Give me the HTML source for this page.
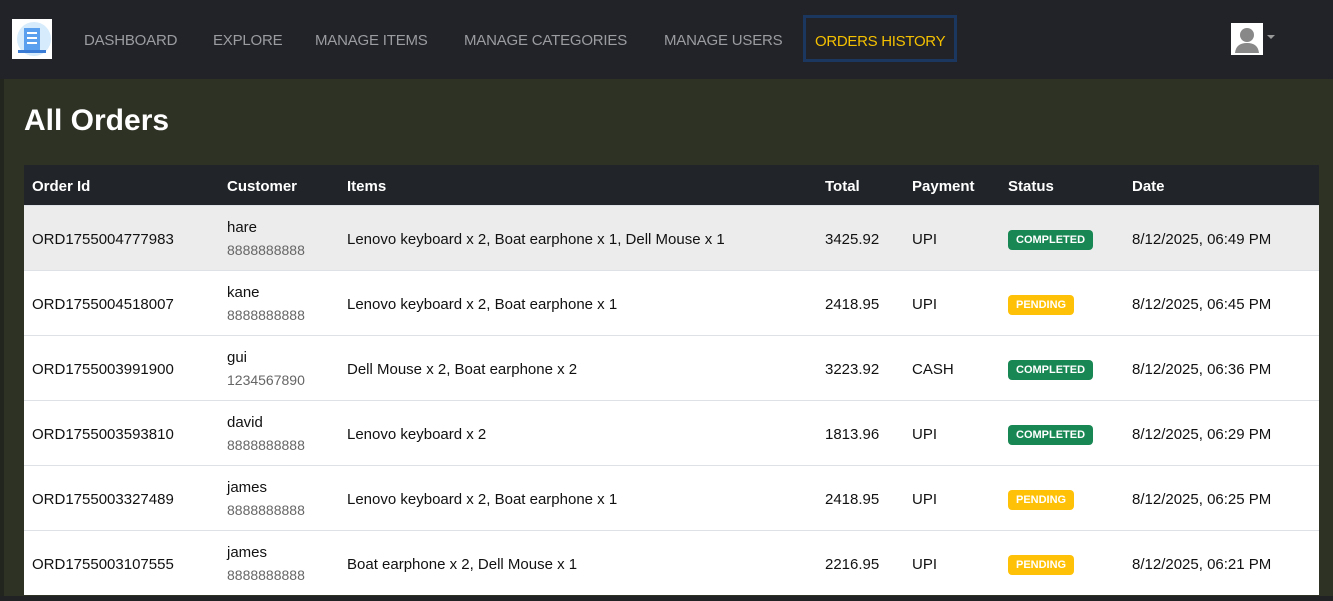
<!DOCTYPE html>
<html><head><meta charset="utf-8"><style>
*{box-sizing:border-box;margin:0;padding:0}
body{width:1333px;height:601px;overflow:hidden;background:#2e3225;font-family:"Liberation Sans",sans-serif;position:relative}
.nav{position:absolute;left:0;top:0;width:1333px;height:79px;background:#212329}
.logo{position:absolute;left:12px;top:19px;width:40px;height:40px;background:#fff}
.nl{position:absolute;top:32px;color:#9a9ca0;font-size:15px;letter-spacing:-0.2px}
.act{position:absolute;left:803px;top:15px;width:154px;height:47px;border:3px solid #1c375f;color:#f5c000;font-size:15px;padding:15px 0 0 9px;letter-spacing:-0.3px}
.av{position:absolute;left:1231px;top:23px;width:32px;height:32px;background:#fff}
.caret{position:absolute;left:1267px;top:35px;border-left:4px solid transparent;border-right:4px solid transparent;border-top:4px solid #999}
.leftbar{position:absolute;left:0;top:79px;width:4px;height:522px;background:#22251d}
h1{position:absolute;left:24px;top:104px;color:#fff;font-size:30px;font-weight:bold}
table{position:absolute;left:24px;top:165px;width:1295px;border-collapse:collapse;font-size:15px;color:#111}
th{background:#212529;color:#fff;text-align:left;height:40px;font-size:15px;padding-left:8px;padding-top:4px}
td{height:65px;background:#fff;border-top:1px solid #dee2e6;padding-left:8px;vertical-align:middle;padding-top:4px}
tr.h td{background:#ececec}
.c{line-height:22px}.c span{color:#666;font-size:14px}
.b{display:inline-block;font-size:11px;font-weight:bold;color:#fff;padding:4px 8px;border-radius:4px}
.g{background:#198754}.y{background:#ffc107}
.bot{position:absolute;left:0;top:596px;width:1333px;height:5px;background:#202224}
</style></head><body>
<div class="nav">
<div class="logo"><svg width="40" height="40"><circle cx="22" cy="20" r="17" fill="#d6ebfb"/><rect x="12" y="9" width="16" height="22" fill="#5aa0ef"/><rect x="15" y="13" width="10" height="2" fill="#fff"/><rect x="15" y="18" width="10" height="2" fill="#fff"/><rect x="15" y="23" width="10" height="2" fill="#fff"/><rect x="6" y="31" width="28" height="3" fill="#3a7bd5"/></svg></div>
<div class="nl" style="left:84px">DASHBOARD</div>
<div class="nl" style="left:213px">EXPLORE</div>
<div class="nl" style="left:315px">MANAGE ITEMS</div>
<div class="nl" style="left:464px">MANAGE CATEGORIES</div>
<div class="nl" style="left:664px">MANAGE USERS</div>
<div class="act">ORDERS HISTORY</div>
<div class="av"><svg width="32" height="32"><circle cx="16" cy="12" r="7" fill="#888"/><path d="M4 30 Q5 20 16 20 Q27 20 28 30Z" fill="#888"/></svg></div>
<div class="caret"></div>
</div>
<div class="leftbar"></div>
<h1>All Orders</h1>
<table>
<tr><th style="width:195px">Order Id</th><th style="width:120px">Customer</th><th style="width:478px">Items</th><th style="width:87px">Total</th><th style="width:96px">Payment</th><th style="width:124px">Status</th><th>Date</th></tr>
<tr class="h"><td>ORD1755004777983</td><td class="c">hare<br><span>8888888888</span></td><td>Lenovo keyboard x 2, Boat earphone x 1, Dell Mouse x 1</td><td>3425.92</td><td>UPI</td><td><span class="b g">COMPLETED</span></td><td>8/12/2025, 06:49 PM</td></tr>
<tr><td>ORD1755004518007</td><td class="c">kane<br><span>8888888888</span></td><td>Lenovo keyboard x 2, Boat earphone x 1</td><td>2418.95</td><td>UPI</td><td><span class="b y">PENDING</span></td><td>8/12/2025, 06:45 PM</td></tr>
<tr><td>ORD1755003991900</td><td class="c">gui<br><span>1234567890</span></td><td>Dell Mouse x 2, Boat earphone x 2</td><td>3223.92</td><td>CASH</td><td><span class="b g">COMPLETED</span></td><td>8/12/2025, 06:36 PM</td></tr>
<tr><td>ORD1755003593810</td><td class="c">david<br><span>8888888888</span></td><td>Lenovo keyboard x 2</td><td>1813.96</td><td>UPI</td><td><span class="b g">COMPLETED</span></td><td>8/12/2025, 06:29 PM</td></tr>
<tr><td>ORD1755003327489</td><td class="c">james<br><span>8888888888</span></td><td>Lenovo keyboard x 2, Boat earphone x 1</td><td>2418.95</td><td>UPI</td><td><span class="b y">PENDING</span></td><td>8/12/2025, 06:25 PM</td></tr>
<tr><td>ORD1755003107555</td><td class="c">james<br><span>8888888888</span></td><td>Boat earphone x 2, Dell Mouse x 1</td><td>2216.95</td><td>UPI</td><td><span class="b y">PENDING</span></td><td>8/12/2025, 06:21 PM</td></tr>
</table>
<div class="bot"></div>
</body></html>
